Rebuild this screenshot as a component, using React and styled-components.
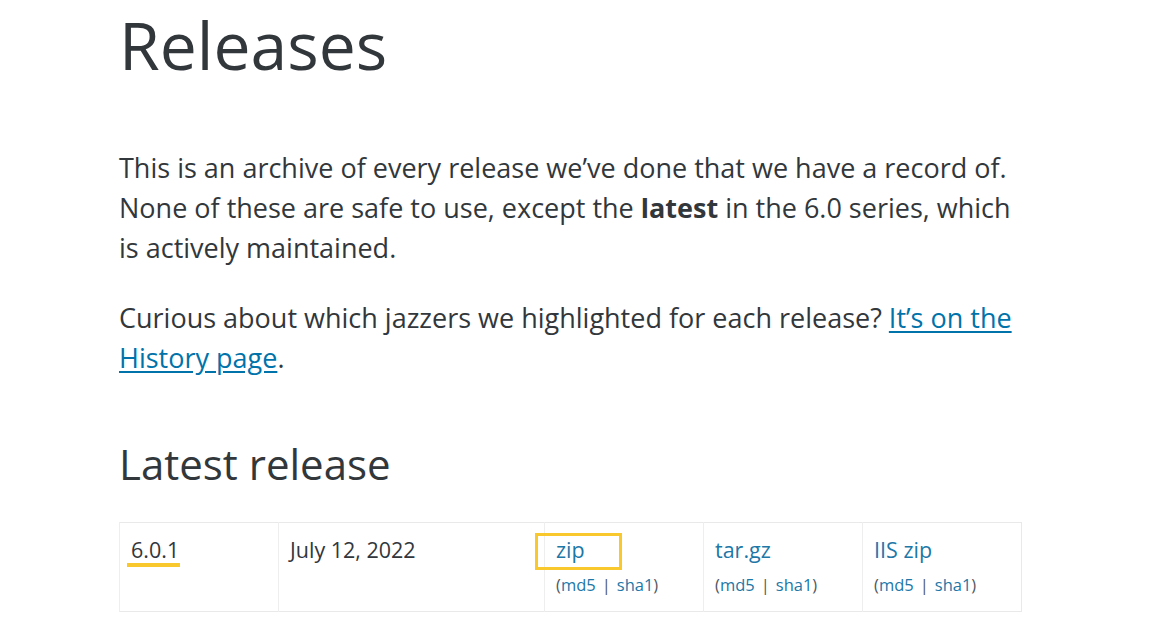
import React from 'react';
import styled, { createGlobalStyle } from 'styled-components';

const GlobalStyle = createGlobalStyle`
  body {
    margin: 0;
    background: #fff;
    color: #32373c;
    font-family: "Open Sans", "Noto Sans", sans-serif;
  }
`;

const Page = styled.main`
  width: 903px;
  padding: 4px 0 0 119px;
`;

const Title = styled.h1`
  margin: 0;
  font-size: 66px;
  line-height: 80px;
  font-weight: 400;
`;

const Intro = styled.div`
  margin-top: 64px;
`;

const Para = styled.p`
  margin: 0 0 30px;
  font-size: 27px;
  line-height: 40px;
`;

const TextLink = styled.a`
  color: #0073aa;
  text-decoration: underline;
  text-underline-offset: 3px;
`;

const SectionTitle = styled.h2`
  margin: 61px 0 33px;
  font-size: 42px;
  line-height: 50px;
  font-weight: 400;
`;

const Table = styled.table`
  width: 903px;
  border-collapse: collapse;
  table-layout: fixed;
  border: 1px solid #e9e9e9;
`;

const Cell = styled.td`
  width: ${p => p.$w}px;
  padding: 10px 11px 14px;
  vertical-align: top;
  border-left: 1px solid #eeeeee;
  box-sizing: border-box;
`;

const Main = styled.div`
  font-size: 21.5px;
  line-height: 33px;
`;

const Version = styled.span`
  position: relative;
  &::after {
    content: '';
    position: absolute;
    left: -4px;
    right: -1px;
    bottom: -3px;
    height: 4px;
    background: #f8c82c;
  }
`;

const DownloadLink = styled.a`
  position: relative;
  color: #1d77a7;
  text-decoration: none;
`;

const FocusBox = styled.span`
  position: absolute;
  left: -21px;
  top: -2px;
  width: 87px;
  height: 37px;
  border: 3px solid #f8c82c;
  box-sizing: border-box;
`;

const Sums = styled.div`
  margin-top: 7px;
  font-size: 16.5px;
  line-height: 24px;
  color: #50575e;
`;

const SumLink = styled.a`
  color: #1d77a7;
  text-decoration: none;
`;

const Sep = styled.span`
  margin: 0 6px;
`;

const downloads = [
  { label: 'zip', focus: true },
  { label: 'tar.gz' },
  { label: 'IIS zip' },
];

function DownloadCell({ label, focus }) {
  return (
    <Cell $w={159}>
      <Main>
        <DownloadLink href="#">
          {focus && <FocusBox />}
          {label}
        </DownloadLink>
      </Main>
      <Sums>
        (<SumLink href="#">md5</SumLink><Sep>|</Sep><SumLink href="#">sha1</SumLink>)
      </Sums>
    </Cell>
  );
}

export default function App() {
  return (
    <>
      <GlobalStyle />
      <Page>
        <Title>Releases</Title>
        <Intro>
          <Para>
            This is an archive of every release we’ve done that we have a record of. None of
            these are safe to use, except the <strong>latest</strong> in the 6.0 series, which
            is actively maintained.
          </Para>
          <Para>
            Curious about which jazzers we highlighted for each release?{' '}
            <TextLink href="#">It’s on the History page</TextLink>.
          </Para>
        </Intro>
        <SectionTitle>Latest release</SectionTitle>
        <Table>
          <tbody>
            <tr>
              <Cell $w={159}>
                <Main><Version>6.0.1</Version></Main>
              </Cell>
              <Cell $w={266}>
                <Main>July 12, 2022</Main>
              </Cell>
              {downloads.map(d => (
                <DownloadCell key={d.label} {...d} />
              ))}
            </tr>
          </tbody>
        </Table>
      </Page>
    </>
  );
}
